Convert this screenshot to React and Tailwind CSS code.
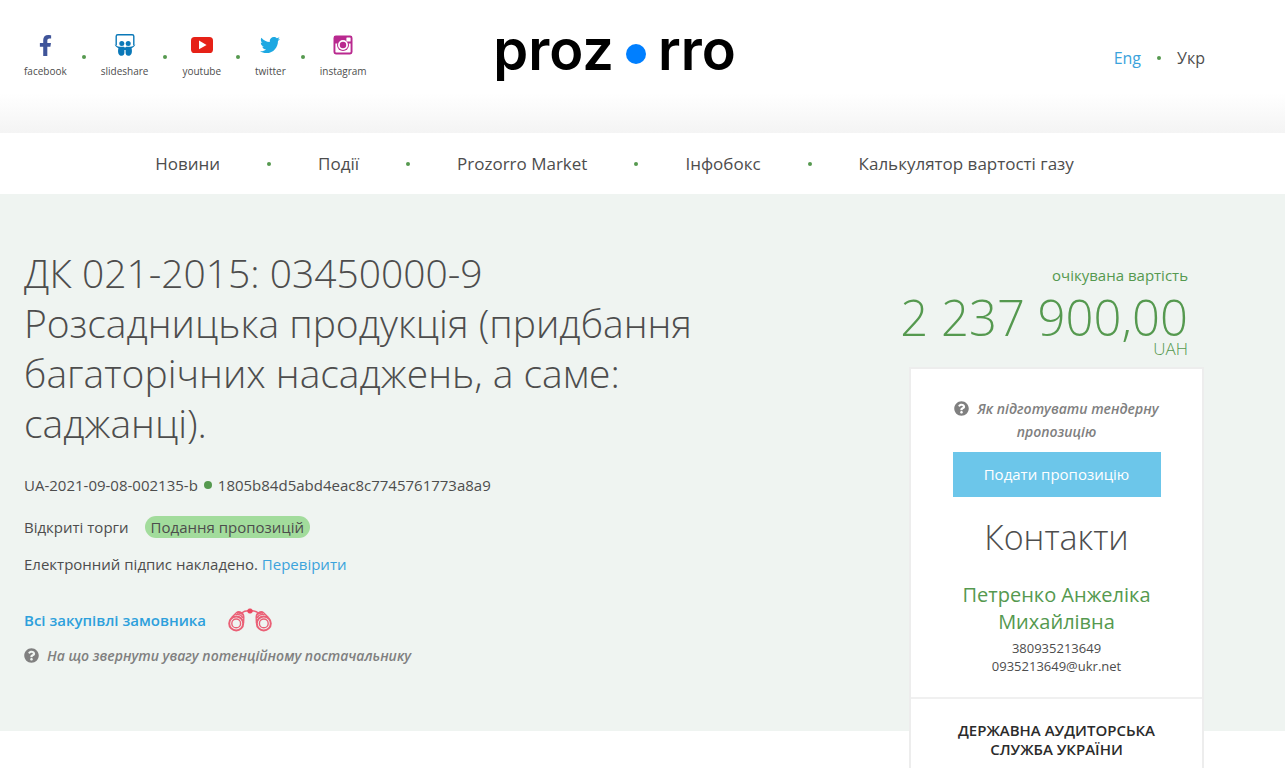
import { Fragment } from "react";
import { FaFacebookF, FaTwitter, FaQuestionCircle } from "react-icons/fa";

function SlideshareIcon() {
  return (
    <svg viewBox="0 0 22 24" className="h-6 w-[22px]" aria-hidden="true">
      <path d="M2.2 12.6V3.2Q2.2 1.8 3.8 1.8H18.2Q19.8 1.8 19.8 3.2V12.6" fill="none" stroke="#0a78b8" strokeWidth="1.4" />
      <circle cx="7.8" cy="10.6" r="2.5" fill="#0a78b8" />
      <circle cx="14.2" cy="10.6" r="2.5" fill="#0a78b8" />
      <path d="M.6 11.4C3.6 14.2 6.8 13.8 9 13.8C10.4 13.8 11 14.4 11 15.2C11 14.4 11.8 13.8 13.2 13.8C15.4 13.8 18.4 14.2 21.4 11.4C20.6 13.2 19.2 14.4 17.6 15.2C18.6 19.6 17.4 22.8 14.4 22.8C12.2 22.8 11.6 21.4 11.6 19.6V17H10.4V19.6C10.4 21.4 9.8 22.8 7.6 22.8C4.6 22.8 3.4 19.6 4.4 15.2C2.8 14.4 1.4 13.2.6 11.4Z" fill="#0a78b8" />
    </svg>
  );
}

function YoutubeIcon() {
  return (
    <svg viewBox="0 0 22 16" className="h-4 w-[22px]" aria-hidden="true">
      <rect width="22" height="16" rx="3.6" fill="#e62117" />
      <path d="M8 3.6V12.2L15.6 7.9Z" fill="#fff" />
    </svg>
  );
}

function InstagramIcon() {
  return (
    <svg viewBox="0 0 20 20" className="size-5" aria-hidden="true">
      <rect x=".5" y=".5" width="19" height="19" rx="2.4" fill="#b9298f" />
      <path d="M2.4 8.4H17.6V16.4Q17.6 17.6 16.4 17.6H3.6Q2.4 17.6 2.4 16.4Z" fill="#fff" />
      <circle cx="10" cy="10" r="6" fill="#b9298f" />
      <circle cx="10" cy="10" r="4.1" fill="#b9298f" stroke="#fff" strokeWidth="1.8" />
      <rect x="13.4" y="2.4" width="4.2" height="4.2" rx=".6" fill="#fff" />
    </svg>
  );
}

function BinocularsIcon() {
  return (
    <svg viewBox="0 0 44 24" className="h-6 w-11" fill="none" stroke="#ea6076" aria-hidden="true">
      <circle cx="8.2" cy="15.4" r="7" strokeWidth="2" />
      <circle cx="8.2" cy="15.4" r="4.4" strokeWidth="1.4" />
      <circle cx="35.8" cy="15.4" r="7" strokeWidth="2" />
      <circle cx="35.8" cy="15.4" r="4.4" strokeWidth="1.4" />
      <path d="M3.6 9.4L8.4 4.8Q10 3.2 12 4L14.6 5.6Q16 7 15.8 9.6L15.6 15M40.4 9.4L35.6 4.8Q34 3.2 32 4L29.4 5.6Q28 7 28.2 9.6L28.4 15M7.6 6.6Q12.4 5.6 15 9.8M36.4 6.6Q31.6 5.6 29 9.8M9 5.2Q13 4.4 15.4 7.4M35 5.2Q31 4.4 28.6 7.4M13.6 5Q17 2.2 22 2.8Q27 2.2 30.4 5" strokeWidth="1.4" />
      <rect x="19.8" y="1" width="4.4" height="4" rx="1.6" fill="#ec4a62" stroke="#ec4a62" />
    </svg>
  );
}

const socials = [
  { name: "facebook", icon: <FaFacebookF className="size-[21px] text-[#3f5499]" /> },
  { name: "slideshare", icon: <SlideshareIcon /> },
  { name: "youtube", icon: <YoutubeIcon /> },
  { name: "twitter", icon: <FaTwitter className="size-5 text-[#1da8e2]" /> },
  { name: "instagram", icon: <InstagramIcon /> },
];

const menu = ["Новини", "Події", "Prozorro Market", "Інфобокс", "Калькулятор вартості газу"];

function Dot() {
  return <span className="size-1 shrink-0 rounded-full bg-[#55994f]" />;
}

function Hint({ children, className = "" }) {
  return (
    <a href="#help" className={`text-sm font-semibold italic text-[#808080] ${className}`}>
      <FaQuestionCircle className="mr-2 inline size-[15px] align-[-2px]" />
      {children}
    </a>
  );
}

export default function App() {
  return (
    <div className="min-h-screen overflow-hidden bg-white font-['Open_Sans',sans-serif] text-[15px] text-[#4d4d4d]">
      <header className="h-[133px] bg-linear-to-b from-white from-70% to-[#f4f4f4] pr-20 pl-6">
        <div className="grid grid-cols-3 items-start">
          <nav aria-label="Соціальні мережі" className="flex items-center gap-[15px] pt-[33px]">
            {socials.map((s, i) => (
              <Fragment key={s.name}>
                {i > 0 && <Dot />}
                <a href={`#${s.name}`} className="flex flex-col items-center gap-1 text-[10px] leading-5">
                  <span className="flex h-6 items-center">{s.icon}</span>
                  {s.name}
                </a>
              </Fragment>
            ))}
          </nav>
          <a href="#home" className="flex items-center justify-center pt-[14px] font-[Inter,sans-serif] text-[56px] leading-[72px] font-semibold text-black">
            <span>proz</span>
            <span className="mx-3 mt-2 size-5 rounded-full bg-[#007fff]" />
            <span>rro</span>
          </a>
          <div className="flex items-center justify-end gap-4 pt-12 text-base leading-5">
            <a href="#en" className="text-[#3ba3dc]">Eng</a>
            <Dot />
            <a href="#uk">Укр</a>
          </div>
        </div>
      </header>

      <nav aria-label="Меню" className="flex h-[61px] items-center justify-center gap-[47px] pr-20 pl-6 text-[17px]">
        {menu.map((m, i) => (
          <Fragment key={m}>
            {i > 0 && <Dot />}
            <a href="#menu">{m}</a>
          </Fragment>
        ))}
      </nav>

      <main className="flex items-start justify-between bg-[#eff4f1] pr-[81px] pl-6">
        <section className="max-w-[700px] pt-[54px]">
          <h1 className="text-[39px] leading-[50px] font-light">
            ДК 021-2015: 03450000-9 <br />Розсадницька продукція (придбання багаторічних насаджень, а саме: саджанці).
          </h1>
          <p className="mt-[25px] flex items-center gap-1.5 leading-6">
            UA-2021-09-08-002135-b
            <span className="size-2 rounded-full bg-[#55994f]" />
            1805b84d5abd4eac8c7745761773a8a9
          </p>
          <p className="mt-[18px] leading-6">
            Відкриті торги
            <span className="ml-4 inline-block rounded-full bg-[#a2dc9c] px-1.5 leading-[22px]">Подання пропозицій</span>
          </p>
          <p className="mt-[13px] leading-6">
            Електронний підпис накладено. <a href="#verify" className="text-[#3ba3dc]">Перевірити</a>
          </p>
          <a href="#all" className="mt-8 flex items-center gap-[22px] leading-6 font-semibold text-[#2da0dc]">
            Всі закупівлі замовника
            <BinocularsIcon />
          </a>
          <Hint className="mt-3 block leading-6">На що звернути увагу потенційному постачальнику</Hint>
        </section>

        <aside className="-mb-[37px] pt-[69px]">
          <div className="flex flex-col items-end pr-4 text-[#55994f]">
            <p className="leading-6">очікувана вартість</p>
            <p className="mt-2 text-[49px] leading-[44px] font-light">2 237 900,00</p>
            <p className="mb-2 text-[17px] leading-5 font-light">UAH</p>
          </div>
          <div className="ml-auto w-[295px] border-2 border-b-0 border-[#ededed] bg-white text-center">
            <div className="px-10 pt-7 pb-[22px]">
              <Hint className="block leading-[23px]">Як підготувати тендерну пропозицію</Hint>
              <button type="button" className="mt-[9px] h-[45px] w-52 bg-[#6cc6ea] text-white">Подати пропозицію</button>
              <h2 className="mt-4 text-[34px] leading-[48px] font-light">Контакти</h2>
              <p className="mt-5 text-xl leading-[27px] text-[#55994f]">Петренко Анжеліка Михайлівна</p>
              <p className="mt-1 text-[13px] leading-[18px]">380935213649<br />0935213649@ukr.net</p>
            </div>
            <div className="border-t-2 border-[#f0f0f0] px-10 pt-[22px] pb-[9px] leading-[19px] font-semibold text-[#2b2b2b]">
              ДЕРЖАВНА АУДИТОРСЬКА СЛУЖБА УКРАЇНИ
            </div>
          </div>
        </aside>
      </main>
    </div>
  );
}
